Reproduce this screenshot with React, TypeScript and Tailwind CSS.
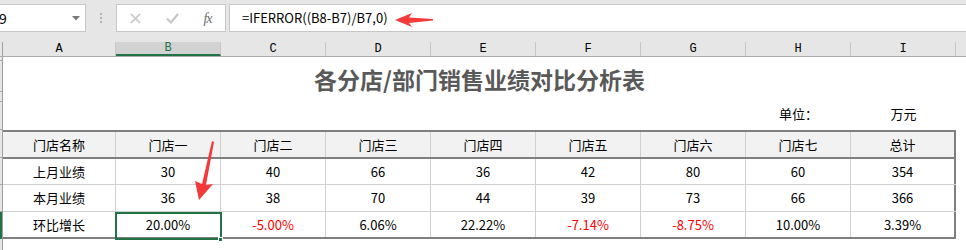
const cols = ["A", "B", "C", "D", "E", "F", "G", "H", "I"];

const header = ["门店名称", "门店一", "门店二", "门店三", "门店四", "门店五", "门店六", "门店七", "总计"];
const rows: { h: string; cells: string[] }[] = [
  { h: "h-[26px] border-b", cells: ["上月业绩", "30", "40", "66", "36", "42", "80", "60", "354"] },
  { h: "h-[27px] border-b", cells: ["本月业绩", "36", "38", "70", "44", "39", "73", "66", "366"] },
  { h: "h-[25px]", cells: ["环比增长", "20.00%", "-5.00%", "6.06%", "22.22%", "-7.14%", "-8.75%", "10.00%", "3.39%"] },
];

function cellWidth(i: number) {
  if (i === 0) return "w-[113px] border-r border-[#d0d0d0]";
  if (i === 8) return "w-[105px] border-r-2 border-[#7f7f7f]";
  return "w-[105px] border-r border-[#d0d0d0]";
}

function Toolbar() {
  return (
    <div className="flex h-[42px] items-start bg-[#e6e6e6] pt-[4px]">
      {/* name box */}
      <div className="flex h-[28px] w-[86px] items-center justify-between border border-l-0 border-[#c6c6c6] bg-white pr-[5px]">
        <span className="-ml-px text-[14px] text-black">9</span>
        <svg width="8" height="5" viewBox="0 0 8 5">
          <path d="M0 0 H8 L4 4.5 Z" fill="#7a7a7a" />
        </svg>
      </div>
      <div className="flex h-[28px] w-[30px] flex-col items-center justify-center gap-[2px]">
        <span className="h-[2px] w-[2px] bg-[#b4b4b4]" />
        <span className="h-[2px] w-[2px] bg-[#b4b4b4]" />
        <span className="h-[2px] w-[2px] bg-[#b4b4b4]" />
      </div>
      {/* cancel / enter / fx */}
      <div className="flex h-[28px] w-[110px] items-center border border-[#c6c6c6] bg-white">
        <div className="flex w-[37px] justify-center">
          <svg width="11" height="11" viewBox="0 0 11 11">
            <path d="M1 1 L10 10 M10 1 L1 10" stroke="#c4c4c4" strokeWidth="1.6" />
          </svg>
        </div>
        <div className="flex w-[36px] justify-center">
          <svg width="13" height="11" viewBox="0 0 13 11">
            <path d="M1 5.5 L5 9.5 L12 1" stroke="#c4c4c4" strokeWidth="2" fill="none" />
          </svg>
        </div>
        <div className="flex w-[35px] justify-center font-['Liberation_Serif'] text-[14px] italic text-[#6e6e6e]">
          <span className="tracking-[-1px]">fx</span>
        </div>
      </div>
      {/* formula bar */}
      <div className="ml-[3px] flex h-[28px] flex-1 items-center border border-r-0 border-[#c6c6c6] bg-white pl-[12px]">
        <span className="text-[13px] text-black">=IFERROR((B8-B7)/B7,0)</span>
      </div>
    </div>
  );
}

function ColumnHeader() {
  return (
    <div className="flex h-[15px] border-b border-[#ababab] bg-[#e6e6e6] font-['Liberation_Mono'] text-[12px] leading-[14px] text-black">
      <div className="w-[3px] border-r border-[#a0a0a0]" />
      {cols.map((c, i) => (
        <div
          key={c}
          className={`flex items-center justify-center border-r border-[#c6c6c6] ${
            i === 0 ? "w-[113px]" : "w-[105px]"
          } ${c === "B" ? "border-b-2 border-b-[#217346] bg-[#d2d2d2] text-[#217346]" : ""}`}
        >
          {c}
        </div>
      ))}
      <div className="flex-1" />
    </div>
  );
}

function RowHeaderStrip() {
  return (
    <div className="flex w-[3px] flex-col border-r border-[#a0a0a0] bg-[#e6e6e6]">
      <div className="h-[4px] border-b border-[#a8a8a8]" />
      <div className="h-[31px] border-b border-[#a8a8a8]" />
      <div className="h-[10px] border-b border-[#a8a8a8]" />
      <div className="h-[28px] border-b border-[#a8a8a8]" />
      <div className="h-[28px] border-b border-[#a8a8a8]" />
      <div className="h-[27px] border-b border-[#a8a8a8]" />
      <div className="h-[27px] border-b border-[#a8a8a8]" />
      <div className="h-[27px] bg-[#217346]" />
      <div className="flex-1" />
    </div>
  );
}

export default function App() {
  return (
    <div className="relative h-[250px] w-[966px] overflow-hidden bg-white font-['Noto_Sans_CJK_SC','Noto_Sans',sans-serif]">
      <Toolbar />
      <ColumnHeader />
      <div className="flex h-[193px]">
        <RowHeaderStrip />
        <div className="flex w-[953px] flex-col">
          {/* title + unit */}
          <div className="flex h-[45px] items-center justify-center pb-[1px] text-[23px] font-bold leading-none text-[#595959]">
            各分店/部门销售业绩对比分析表
          </div>
          <div className="flex h-[28px] items-center pb-[4px] text-[13px] text-black">
            <div className="w-[743px]" />
            <div className="w-[105px] text-center">单位：</div>
            <div className="w-[105px] text-center">万元</div>
          </div>
          {/* table */}
          <div className="border-y-2 border-[#7f7f7f] text-[13px] text-black">
            <div className="flex h-[27px] border-b-2 border-[#7f7f7f] bg-[#f2f2f2]">
              {header.map((t, i) => (
                <div key={i} className={`flex items-center justify-center ${cellWidth(i)}`}>
                  {t}
                </div>
              ))}
            </div>
            {rows.map((r, ri) => (
              <div key={ri} className={`flex border-[#d0d0d0] ${r.h}`}>
                {r.cells.map((t, i) => (
                  <div
                    key={i}
                    className={`flex items-center justify-center ${cellWidth(i)} ${
                      t.startsWith("-") ? "text-[#ff0000]" : ""
                    }`}
                  >
                    {t}
                  </div>
                ))}
              </div>
            ))}
          </div>
        </div>
      </div>

      {/* selected cell B9 */}
      <div className="absolute left-[115px] top-[212px] h-[28px] w-[107px] border-2 border-[#217346]" />
      <div className="absolute left-[218px] top-[237px] h-[5px] w-[5px] border border-white bg-[#217346]" />

      {/* annotation arrows */}
      <svg className="absolute left-0 top-0" width="966" height="250">
        <polygon
          points="395,20 412,13 409,17.5 433,19 433,20.5 409,23 412,27"
          fill="#f23a3a"
        />
        <polygon
          points="199,200 195,181 202,184 212,141 214,142 206,185 213,184"
          fill="#f23a3a"
        />
      </svg>
    </div>
  );
}
